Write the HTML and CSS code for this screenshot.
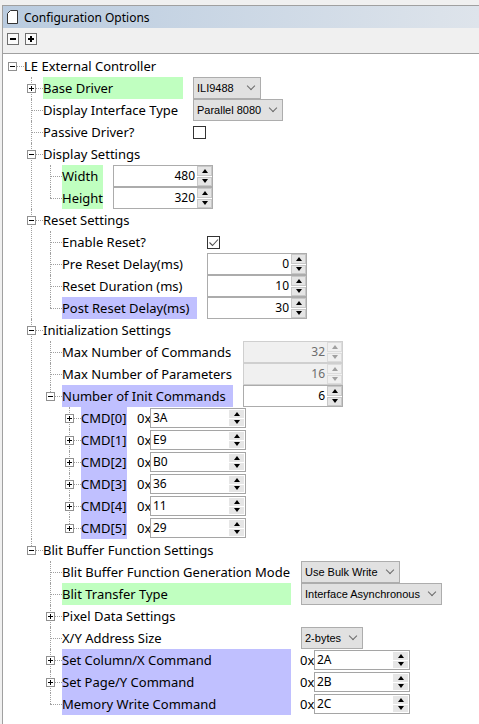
FILE: index.html
```html
<!DOCTYPE html>
<html>
<head>
<meta charset="utf-8">
<link rel="stylesheet" href="styles.css">
</head>
<body>
<div class="panel">
  <div class="titlebar">
    <svg class="doc" width="11" height="14" viewBox="0 0 11 14"><path d="M3.5 0.5H10.5V13.5H0.5V3.5Z" fill="#fff" stroke="#333"/></svg>
    <span>Configuration Options</span>
  </div>
  <div class="toolbar">
    <span class="tb"></span>
    <span class="tb plus"></span>
  </div>
  <div class="content">
    <ul class="tree root">
      <li>
        <div class="row"><span class="toggle"></span><span class="label head">LE External Controller</span></div>
        <ul class="tree g1">
          <li><div class="row"><span class="toggle plus"></span><span class="label green">Base Driver</span><span class="combo short">ILI9488</span></div></li>
          <li><div class="row"><span class="label">Display Interface Type</span><span class="combo">Parallel 8080</span></div></li>
          <li><div class="row"><span class="label">Passive Driver?</span><span class="check"></span></div></li>
          <li>
            <div class="row"><span class="toggle"></span><span class="label head">Display Settings</span></div>
            <ul class="tree gdisp">
              <li><div class="row"><span class="label green">Width</span><span class="spin"><span class="val">480</span><span class="btns"><i class="up"></i><i class="dn"></i></span></span></div></li>
              <li><div class="row"><span class="label green">Height</span><span class="spin"><span class="val">320</span><span class="btns"><i class="up"></i><i class="dn"></i></span></span></div></li>
            </ul>
          </li>
          <li>
            <div class="row"><span class="toggle"></span><span class="label head">Reset Settings</span></div>
            <ul class="tree greset">
              <li><div class="row"><span class="label">Enable Reset?</span><span class="check on"><svg width="11" height="11" viewBox="0 0 11 11"><path d="M1.5 5.5L4.5 8.5L10 2.5" fill="none" stroke="#505050" stroke-width="1.1"/></svg></span></div></li>
              <li><div class="row"><span class="label">Pre Reset Delay(ms)</span><span class="spin"><span class="val">0</span><span class="btns"><i class="up"></i><i class="dn"></i></span></span></div></li>
              <li><div class="row"><span class="label">Reset Duration (ms)</span><span class="spin"><span class="val">10</span><span class="btns"><i class="up"></i><i class="dn"></i></span></span></div></li>
              <li><div class="row"><span class="label purple">Post Reset Delay(ms)</span><span class="spin"><span class="val">30</span><span class="btns"><i class="up"></i><i class="dn"></i></span></span></div></li>
            </ul>
          </li>
          <li>
            <div class="row"><span class="toggle"></span><span class="label head">Initialization Settings</span></div>
            <ul class="tree ginit">
              <li><div class="row"><span class="label">Max Number of Commands</span><span class="spin off"><span class="val">32</span><span class="btns"><i class="up"></i><i class="dn"></i></span></span></div></li>
              <li><div class="row"><span class="label">Max Number of Parameters</span><span class="spin off"><span class="val">16</span><span class="btns"><i class="up"></i><i class="dn"></i></span></span></div></li>
              <li>
                <div class="row"><span class="toggle"></span><span class="label purple">Number of Init Commands</span><span class="spin"><span class="val">6</span><span class="btns"><i class="up"></i><i class="dn"></i></span></span></div>
                <ul class="tree gcmd">
                  <li><div class="row"><span class="toggle plus"></span><span class="label purple">CMD[0]</span><span class="hex"><span class="pre">0x</span><span class="hbox"><span class="hval">3A</span><span class="hbtns"><i class="up"></i><i class="dn"></i></span></span></span></div></li>
                  <li><div class="row"><span class="toggle plus"></span><span class="label purple">CMD[1]</span><span class="hex"><span class="pre">0x</span><span class="hbox"><span class="hval">E9</span><span class="hbtns"><i class="up"></i><i class="dn"></i></span></span></span></div></li>
                  <li><div class="row"><span class="toggle plus"></span><span class="label purple">CMD[2]</span><span class="hex"><span class="pre">0x</span><span class="hbox"><span class="hval">B0</span><span class="hbtns"><i class="up"></i><i class="dn"></i></span></span></span></div></li>
                  <li><div class="row"><span class="toggle plus"></span><span class="label purple">CMD[3]</span><span class="hex"><span class="pre">0x</span><span class="hbox"><span class="hval">36</span><span class="hbtns"><i class="up"></i><i class="dn"></i></span></span></span></div></li>
                  <li><div class="row"><span class="toggle plus"></span><span class="label purple">CMD[4]</span><span class="hex"><span class="pre">0x</span><span class="hbox"><span class="hval">11</span><span class="hbtns"><i class="up"></i><i class="dn"></i></span></span></span></div></li>
                  <li><div class="row"><span class="toggle plus"></span><span class="label purple">CMD[5]</span><span class="hex"><span class="pre">0x</span><span class="hbox"><span class="hval">29</span><span class="hbtns"><i class="up"></i><i class="dn"></i></span></span></span></div></li>
                </ul>
              </li>
            </ul>
          </li>
          <li>
            <div class="row"><span class="toggle"></span><span class="label head">Blit Buffer Function Settings</span></div>
            <ul class="tree gblit">
              <li><div class="row"><span class="label">Blit Buffer Function Generation Mode</span><span class="combo">Use Bulk Write</span></div></li>
              <li><div class="row"><span class="label green">Blit Transfer Type</span><span class="combo">Interface Asynchronous</span></div></li>
              <li><div class="row"><span class="toggle plus"></span><span class="label head">Pixel Data Settings</span></div></li>
              <li><div class="row"><span class="label">X/Y Address Size</span><span class="combo">2-bytes</span></div></li>
              <li><div class="row"><span class="toggle plus"></span><span class="label purple">Set Column/X Command</span><span class="hex wide"><span class="pre">0x</span><span class="hbox"><span class="hval">2A</span><span class="hbtns"><i class="up"></i><i class="dn"></i></span></span></span></div></li>
              <li><div class="row"><span class="toggle plus"></span><span class="label purple">Set Page/Y Command</span><span class="hex wide"><span class="pre">0x</span><span class="hbox"><span class="hval">2B</span><span class="hbtns"><i class="up"></i><i class="dn"></i></span></span></span></div></li>
              <li><div class="row"><span class="label purple">Memory Write Command</span><span class="hex wide"><span class="pre">0x</span><span class="hbox"><span class="hval">2C</span><span class="hbtns"><i class="up"></i><i class="dn"></i></span></span></span></div></li>
            </ul>
          </li>
        </ul>
      </li>
    </ul>
  </div>
</div>
</body>
</html>
```

FILE: styles.css
```css
html, body {
  margin: 0;
  padding: 0;
}
body {
  background: #f0f0f0;
  font-family: "Noto Sans", "DejaVu Sans", sans-serif;
  font-size: 13px;
  color: #000;
  height: 724px;
  overflow: hidden;
}
.panel {
  margin: 5px 0 0 2px;
  border-top: 1px solid #a0a0a0;
  border-left: 1px solid #a0a0a0;
  height: 718px;
  display: flex;
  flex-direction: column;
}
.titlebar {
  height: 22px;
  flex: none;
  background: linear-gradient(to right, #b9cbdf, #dee4eb);
  display: flex;
  align-items: center;
  padding-left: 4px;
  gap: 6px;
  font-size: 12px;
}
.doc { display: block; }
.toolbar {
  height: 20px;
  flex: none;
  padding: 5px 0 0 4px;
  display: flex;
  align-items: flex-start;
  gap: 6px;
  border-bottom: 1px solid #a0a0a0;
}
.tb {
  width: 12px;
  height: 12px;
  box-sizing: border-box;
  border: 1px solid #6e6e6e;
  background: linear-gradient(#000, #000) center / 6px 2px no-repeat, #fafafa;
}
.tb.plus {
  background: linear-gradient(#000, #000) center / 6px 2px no-repeat,
              linear-gradient(#000, #000) center / 2px 6px no-repeat, #fafafa;
}
.content {
  flex: 1;
  background: #fff;
  padding-top: 1px;
}
.tree {
  list-style: none;
  margin: 0;
  padding: 0 0 0 19px;
}
.tree.root { padding-left: 0; --lw: auto; }
.tree li { position: relative; }
.tree .tree > li::before {
  content: "";
  position: absolute;
  left: 9px;
  top: 0;
  bottom: 0;
  border-left: 1px dotted #a0a0a0;
}
.tree .tree > li:last-child::before {
  bottom: auto;
  height: 11px;
}
.row {
  position: relative;
  height: 22px;
  padding-left: 21px;
  display: flex;
  align-items: center;
}
.row::before {
  content: "";
  position: absolute;
  left: 9px;
  top: 11px;
  width: 12px;
  border-top: 1px dotted #a0a0a0;
}
.toggle {
  position: absolute;
  left: 5px;
  top: 7px;
  width: 9px;
  height: 9px;
  box-sizing: border-box;
  border: 1px solid #909090;
  z-index: 1;
  background: linear-gradient(#000, #000) center / 5px 1px no-repeat, #fff;
}
.toggle.plus {
  background: linear-gradient(#000, #000) center / 5px 1px no-repeat,
              linear-gradient(#000, #000) center / 1px 5px no-repeat, #fff;
}
.label {
  flex: none;
  width: var(--lw);
  height: 22px;
  line-height: 22px;
  white-space: nowrap;
  margin-right: 10px;
}
.label.head { width: auto; }
.green { background: #c0ffc0; }
.purple { background: #c0c0ff; }

.g1 { --lw: 140px; }
.gdisp { --lw: 41px; }
.greset { --lw: 135px; }
.ginit { --lw: 171px; }
.gcmd { --lw: 46px; }
.gblit { --lw: 229px; }

.combo {
  height: 22px;
  box-sizing: border-box;
  border: 1px solid #adadad;
  background: #e1e1e1;
  display: flex;
  align-items: center;
  padding: 0 6px 0 3px;
  font-family: "Liberation Sans", Arial, sans-serif;
  font-size: 11px;
  white-space: nowrap;
}
.combo.short { min-width: 68px; box-sizing: border-box; justify-content: space-between; }
.combo::after {
  content: "";
  width: 5px;
  height: 5px;
  margin: -4px 0 0 9px;
  border-right: 1px solid #6a6a6a;
  border-bottom: 1px solid #6a6a6a;
  transform: rotate(45deg);
}
.check {
  width: 13px;
  height: 13px;
  box-sizing: border-box;
  border: 1px solid #333;
  background: #fff;
  display: flex;
  align-items: center;
  justify-content: center;
  margin-top: 1px;
}
.check svg { display: block; }

.spin {
  width: 100px;
  height: 22px;
  box-sizing: border-box;
  border: 1px solid #acacac;
  background: #fff;
  display: flex;
  font-size: 12px;
}
.spin .val {
  flex: 1;
  text-align: right;
  line-height: 20px;
  padding-right: 2px;
}
.btns {
  width: 15px;
  display: flex;
  flex-direction: column;
  gap: 1px;
  padding: 0;
}
.btns i, .hbtns i {
  flex: 1;
  display: flex;
  align-items: center;
  justify-content: center;
  background: #e5e5e5;
  border: 1px solid #c8c8c8;
}
.btns i::after, .hbtns i::after {
  content: "";
  width: 0;
  height: 0;
  border-left: 3px solid transparent;
  border-right: 3px solid transparent;
}
.up::after { border-bottom: 4px solid #000; }
.dn::after { border-top: 4px solid #000; }
.spin.off { background: #f0f0f0; border-color: #cfcfcf; color: #6d6d6d; }
.spin.off .btns i { background: #f0f0f0; border-color: #dcdcdc; }
.spin.off .up::after { border-bottom-color: #a0a0a0; }
.spin.off .dn::after { border-top-color: #a0a0a0; }

.hex {
  display: flex;
  align-items: center;
  font-size: 13px;
}
.hex .pre { width: 13px; }
.hex.wide { margin-left: -1px; }
.hex.wide .pre { width: 14px; }
.hbox {
  width: 96px;
  height: 20px;
  box-sizing: border-box;
  border: 1px solid #a5a5a5;
  background: #fff;
  display: flex;
  font-size: 12px;
}
.hval {
  flex: 1;
  line-height: 18px;
  padding-left: 2px;
}
.hbtns {
  width: 15px;
  display: flex;
  flex-direction: column;
  gap: 1px;
  padding: 1px 1px 1px 0;
}
.hbtns i { border: none; background: #e6e6e6; }
```
